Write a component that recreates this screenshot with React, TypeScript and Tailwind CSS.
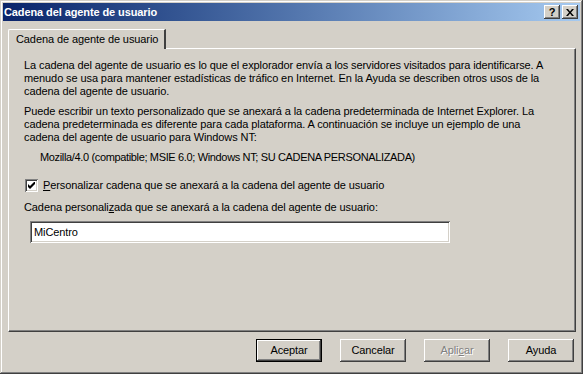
import type { ReactNode } from 'react';

const raised =
  'shadow-[inset_-1px_-1px_#404040,inset_1px_1px_#ffffff,inset_-2px_-2px_#808080,inset_2px_2px_#d4d0c8]';
const sunken =
  'shadow-[inset_1px_1px_#808080,inset_-1px_-1px_#ffffff,inset_2px_2px_#404040,inset_-2px_-2px_#d4d0c8]';

function Btn({ children, isDefault, disabled }: { children: ReactNode; isDefault?: boolean; disabled?: boolean }) {
  return (
    <div
      className={`w-[66px] h-[23px] flex items-center justify-center bg-[#d4d0c8] ${
        isDefault ? 'border border-black' : ''
      }`}
    >
      <div
        className={`w-full h-full flex items-center justify-center ${raised} ${
          disabled ? 'text-[#808080] [text-shadow:1px_1px_#ffffff]' : 'text-black'
        }`}
      >
        {children}
      </div>
    </div>
  );
}

function TitleBtn({ children }: { children: ReactNode }) {
  return (
    <div className={`w-[16px] h-[14px] bg-[#d4d0c8] flex items-center justify-center ${raised}`}>
      {children}
    </div>
  );
}

export default function App() {
  return (
    <div
      className={`w-[583px] h-[374px] bg-[#d4d0c8] p-[3px] flex flex-col text-[11px] tracking-[-0.1px] text-black shadow-[inset_-1px_-1px_#404040,inset_1px_1px_#d4d0c8,inset_-2px_-2px_#808080,inset_2px_2px_#ffffff]`}
      style={{ fontFamily: '"Liberation Sans", Arial, sans-serif' }}
    >
      {/* title bar */}
      <div className="h-[18px] flex items-center justify-between pl-[1px] pr-[2px] bg-gradient-to-r from-[#0a246a] to-[#a6caf0]">
        <span className="text-white font-bold text-[11px] tracking-[-0.1px] leading-none">Cadena del agente de usuario</span>
        <div className="flex items-center">
          <TitleBtn>
            <span className="font-bold text-[11px] leading-none">?</span>
          </TitleBtn>
          <div className="w-[2px]" />
          <TitleBtn>
            <svg width="8" height="7" viewBox="0 0 8 7">
              <path d="M0 0h2l2 2.5L6 0h2L5 3.5 8 7H6L4 4.5 2 7H0l3-3.5z" fill="#000" />
            </svg>
          </TitleBtn>
        </div>
      </div>

      <div className="flex flex-col pl-[5px] pr-[4px] pt-[8px]">
        {/* tab */}
        <div className="flex">
          <div className="relative w-[158px] h-[20px] flex items-center pl-[7px] border-t border-l border-white border-r-[2px] border-r-[#404040] rounded-tl-[2px] -mb-[1px] z-10 bg-[#d4d0c8]">
            Cadena de agente de usuario
          </div>
        </div>

        {/* panel */}
        <div className="h-[284px] border-t border-l border-white border-r border-b border-r-[#404040] border-b-[#404040] shadow-[inset_-1px_-1px_#808080] pl-[15px] pr-[10px] pt-[10px] leading-[13px] whitespace-nowrap">
          <p>
            La cadena del agente de usuario es lo que el explorador envía a los servidores visitados para identificarse. A
            <br />
            menudo se usa para mantener estadísticas de tráfico en Internet. En la Ayuda se describen otros usos de la
            <br />
            cadena del agente de usuario.
          </p>
          <p className="mt-[7px]">
            Puede escribir un texto personalizado que se anexará a la cadena predeterminada de Internet Explorer. La
            <br />
            cadena predeterminada es diferente para cada plataforma. A continuación se incluye un ejemplo de una
            <br />
            cadena del agente de usuario para Windows NT:
          </p>
          <p className="mt-[7px] pl-[16px] tracking-[-0.35px]">
            Mozilla/4.0 (compatible; MSIE 6.0; Windows NT; SU CADENA PERSONALIZADA)
          </p>

          <div className="flex items-center mt-[15px] pl-[1px]">
            <div className={`w-[13px] h-[13px] bg-white flex items-center justify-center ${sunken}`}>
              <svg width="7" height="7" viewBox="0 0 7 7">
                <path d="M0 2v3l2 2 5-5V-1L2 4z" fill="#000" />
              </svg>
            </div>
            <span className="ml-[5px]">
              <u>P</u>ersonalizar cadena que se anexará a la cadena del agente de usuario
            </span>
          </div>

          <p className="mt-[9px]">
            Cadena personali<u>z</u>ada que se anexará a la cadena del agente de usuario:
          </p>
          <div className={`mt-[7px] ml-[6px] w-[420px] h-[22px] bg-white flex items-center pl-[4px] ${sunken}`}>
            MiCentro
          </div>
        </div>

        {/* buttons */}
        <div className="flex justify-end gap-[18px] mt-[7px] pr-[2px]">
          <Btn isDefault>Aceptar</Btn>
          <Btn>Cancelar</Btn>
          <Btn disabled>
            <span>
              Apli<u>c</u>ar
            </span>
          </Btn>
          <Btn>Ayuda</Btn>
        </div>
      </div>
    </div>
  );
}
